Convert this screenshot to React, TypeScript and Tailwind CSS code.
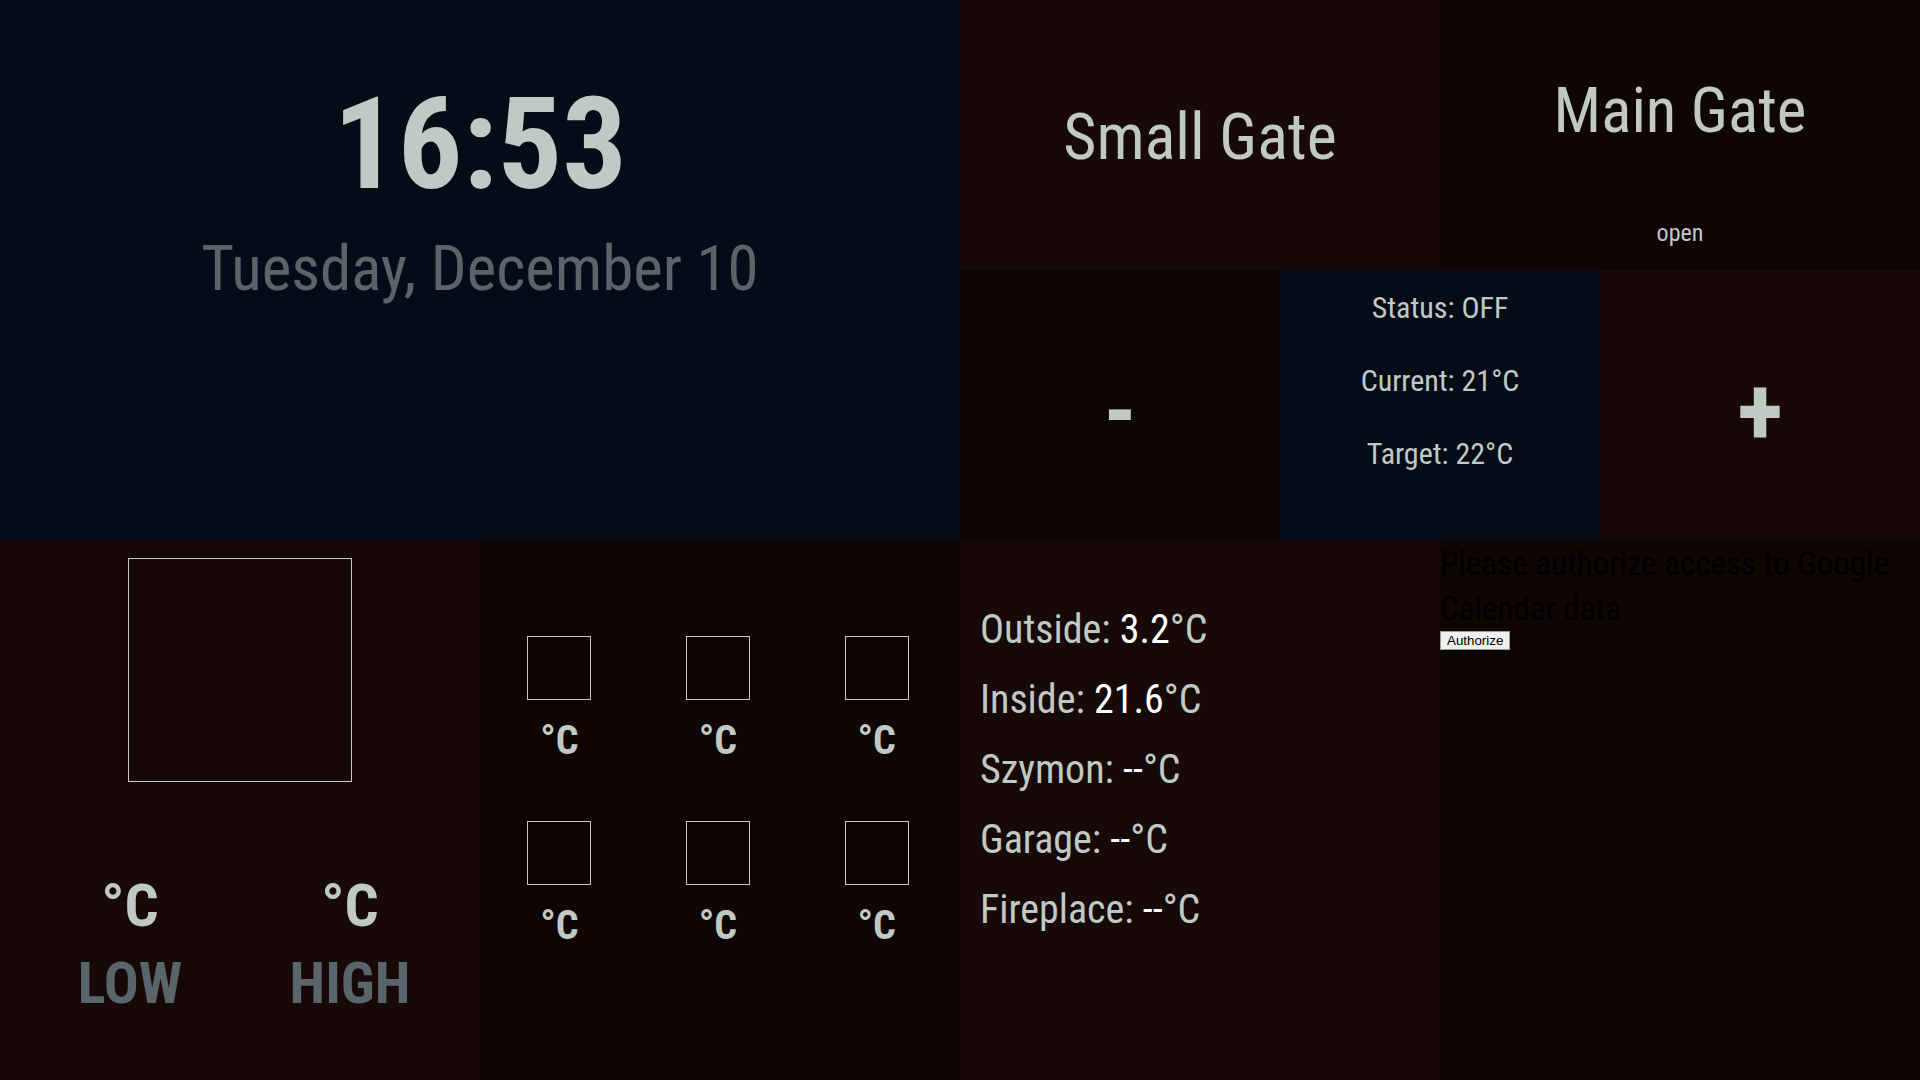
import React from "react";

const forecast = [0, 1, 2, 3, 4, 5];

const sensors = [
  { label: "Outside", value: "3.2" },
  { label: "Inside", value: "21.6" },
  { label: "Szymon", value: "--" },
  { label: "Garage", value: "--" },
  { label: "Fireplace", value: "--" },
];

function Clock() {
  return (
    <section className="flex flex-col items-center bg-[#050c18] pt-[80px]">
      <div className="text-[128px] font-bold leading-none">16:53</div>
      <div className="mt-[29px] text-[63px] leading-none text-[#5a646b]">Tuesday, December 10</div>
    </section>
  );
}

function Controls() {
  return (
    <section className="grid grid-rows-2">
      <div className="grid grid-cols-2">
        <div className="flex items-center justify-center bg-[#160907] pt-[6px]">
          <span className="text-[64px] leading-none">Small Gate</span>
        </div>
        <div className="flex flex-col items-center bg-[#0f0504] pt-[79px]">
          <span className="text-[63px] leading-none">Main Gate</span>
          <span className="mt-[79px] text-[24px] leading-none">open</span>
        </div>
      </div>
      <div className="grid grid-cols-3">
        <button className="flex items-center justify-center bg-[#0f0504] pt-[14px] text-[92px] font-bold leading-none text-[#c1c9c4]">
          -
        </button>
        <div className="flex flex-col items-center bg-[#050c18] pt-[1px] text-[30px] leading-[73px]">
          <span>Status: OFF</span>
          <span>Current: 21°C</span>
          <span>Target: 22°C</span>
        </div>
        <button className="flex items-center justify-center bg-[#160907] pt-[12px] text-[96px] font-bold leading-none text-[#c1c9c4]">
          +
        </button>
      </div>
    </section>
  );
}

function Weather() {
  return (
    <section className="grid grid-cols-2">
      <div className="flex flex-col bg-[#160907] pt-[18px]">
        <div className="mx-auto h-[224px] w-[224px] border border-[#c8c8c8]" />
        <div className="mx-auto mt-[94px] grid w-[440px] grid-cols-2 font-bold">
          <div className="flex flex-col items-center">
            <span className="text-[60px] leading-none">°C</span>
            <span className="mt-[18px] text-[58px] leading-none text-[#5a646b]">LOW</span>
          </div>
          <div className="flex flex-col items-center">
            <span className="text-[60px] leading-none">°C</span>
            <span className="mt-[18px] text-[58px] leading-none text-[#5a646b]">HIGH</span>
          </div>
        </div>
      </div>
      <div className="bg-[#0f0504] pt-[96px]">
        <div className="grid w-[476px] grid-cols-3 gap-y-[60px]">
          {forecast.map((i) => (
            <div key={i} className="flex flex-col items-center">
              <div className="h-[64px] w-[64px] border border-[#c8c8c8]" />
              <span className="mt-[21px] text-[40px] font-bold leading-none">°C</span>
            </div>
          ))}
        </div>
      </div>
    </section>
  );
}

function Sensors() {
  return (
    <div className="bg-[#160907] pl-[20px] pt-[55px] text-[40px] leading-[70px]">
      {sensors.map((s) => (
        <div key={s.label}>
          {s.label}: <span className="text-white">{s.value}</span>°C
        </div>
      ))}
    </div>
  );
}

function Calendar() {
  return (
    <div className="bg-[#0f0504] pt-[1px]">
      <div className="text-[33px] leading-[45px] text-black">Please authorize access to Google Calendar data</div>
      <button className="block border border-[#9a9a9a] bg-[#efefef] px-[6px] py-[1px] font-['Liberation_Sans',Arial,sans-serif] text-[13.33px] leading-[1.15] text-black">
        Authorize
      </button>
    </div>
  );
}

export default function App() {
  return (
    <div className="grid h-[1080px] w-[1920px] grid-cols-2 grid-rows-2 overflow-hidden font-['Roboto_Condensed',Roboto,sans-serif] font-stretch-condensed text-[#c1c9c4]">
      <Clock />
      <Controls />
      <Weather />
      <section className="grid grid-cols-2">
        <Sensors />
        <Calendar />
      </section>
    </div>
  );
}
